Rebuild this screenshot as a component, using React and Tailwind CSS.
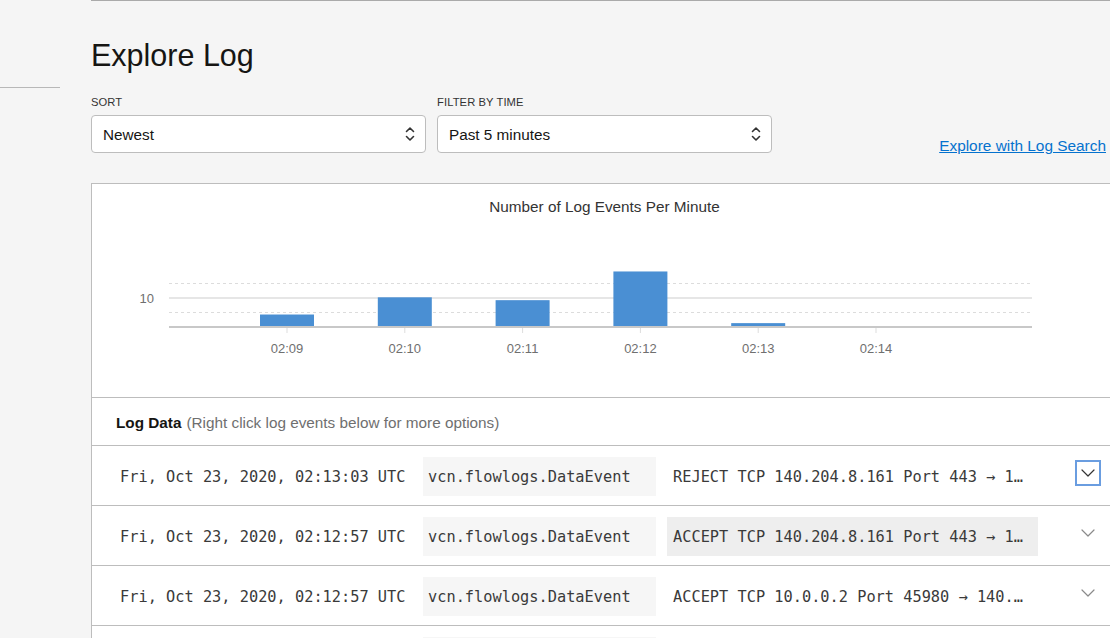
import React from "react";

function UpDown() {
  return (
    <svg width="10" height="16" viewBox="0 0 10 16" fill="none" stroke="#333" strokeWidth="1.6" strokeLinecap="round" strokeLinejoin="round">
      <polyline points="1.5,5.5 5,2 8.5,5.5" />
      <polyline points="1.5,10.5 5,14 8.5,10.5" />
    </svg>
  );
}

function Field({ label, value, className = "" }) {
  return (
    <div className={"flex flex-col " + className}>
      <div className="text-[11.2px] leading-[14px] text-[#333] tracking-[0.1px]">{label}</div>
      <div className="mt-[6px] w-[335px] h-[38px] bg-white border border-[#bdbdbd] rounded-[4px] flex items-center justify-between pl-[11px] pr-[10px]">
        <span className="pt-[2px] text-[15.3px] text-[#161513]">{value}</span>
        <UpDown />
      </div>
    </div>
  );
}

function Chevron({ color }) {
  return (
    <svg width="14" height="8" viewBox="0 0 14 8" fill="none" stroke={color} strokeWidth="1.2" strokeLinecap="round" strokeLinejoin="round">
      <polyline points="1,1 7,7 13,1" />
    </svg>
  );
}

const bars = [4, 10, 9, 19, 1];
const labels = ["02:09", "02:10", "02:11", "02:12", "02:13", "02:14"];

function Chart() {
  const unit = 2.87;
  const base = 109;
  return (
    <svg width="1025" height="180" viewBox="0 0 1025 180" className="block">
      <line x1="77" x2="940" y1="66.5" y2="66.5" stroke="#dcdcdc" strokeWidth="1" strokeDasharray="3 3" />
      <line x1="77" x2="940" y1="81" y2="81" stroke="#e6e6e6" strokeWidth="2" />
      <line x1="77" x2="940" y1="95.5" y2="95.5" stroke="#dcdcdc" strokeWidth="1" strokeDasharray="3 3" />
      <text x="62" y="86" textAnchor="end" fontSize="13" fill="#6f6f6f" fontFamily="Liberation Sans, Arial, sans-serif">10</text>
      {bars.map((v, i) => {
        const h = v * unit;
        return <rect key={i} x={168 + i * 117.8} y={base - h} width="54" height={h} fill="#4a8fd3" />;
      })}
      <line x1="77" x2="940" y1="110" y2="110" stroke="#c8c8c8" strokeWidth="2" />
      {labels.map((l, i) => {
        const cx = 195 + i * 117.8;
        return (
          <g key={l}>
            <line x1={cx} x2={cx} y1="111" y2="116" stroke="#dddddd" strokeWidth="1" />
            <text x={cx} y="136" textAnchor="middle" fontSize="13" fill="#6f6f6f" fontFamily="Liberation Sans, Arial, sans-serif">{l}</text>
          </g>
        );
      })}
    </svg>
  );
}

const rows = [
  { ts: "Fri, Oct 23, 2020, 02:13:03 UTC", msg: "REJECT TCP 140.204.8.161 Port 443 → 10.0.0.2 Port 45980", focus: true },
  { ts: "Fri, Oct 23, 2020, 02:12:57 UTC", msg: "ACCEPT TCP 140.204.8.161 Port 443 → 10.0.0.2 Port 45980", hover: true },
  { ts: "Fri, Oct 23, 2020, 02:12:57 UTC", msg: "ACCEPT TCP 10.0.0.2 Port 45980 → 140.204.8.161 Port 443" },
  { ts: "Fri, Oct 23, 2020, 02:12:57 UTC", msg: "ACCEPT TCP 10.0.0.2 Port 45980 → 140.204.8.161 Port 443" },
];

export default function App() {
  return (
    <div className="flex w-[1110px] h-[638px] overflow-hidden bg-[#f5f5f5] text-[#161513] font-['Liberation_Sans',Arial,sans-serif]">
      <aside className="w-[91px] shrink-0">
        <div className="mt-[87px] w-[60px] h-px bg-[#b8b8b8]" />
      </aside>
      <main className="flex-1 min-w-0 border-t border-[#aaaaaa]">
        <h1 className="mt-[36px] text-[30.5px] leading-[36px] text-[#161513]">Explore Log</h1>
        <div className="mt-[22px] flex items-end pr-[4px]">
          <Field label="SORT" value="Newest" />
          <Field label="FILTER BY TIME" value="Past 5 minutes" className="ml-[11px]" />
          <a href="#" className="ml-auto mb-[-3px] text-[15.4px] leading-[20px] text-[#0572ce] underline">
            Explore with Log Search
          </a>
        </div>
        <section className="mt-[30px] w-[1026px] bg-white border-l border-t border-[#bdbdbd]">
          <div className="h-[214px] border-b border-[#bdbdbd]">
            <div className="pt-[13px] text-center text-[15.3px] leading-[20px] text-[#333]">Number of Log Events Per Minute</div>
            <Chart />
          </div>
          <div className="h-[48px] border-b border-[#bdbdbd] flex items-center pt-[3px] pl-[24px] text-[15.3px]">
            <span className="font-bold text-[#161513]">Log Data</span>
            <span className="ml-[5px] text-[#6f6f6f]">(Right click log events below for more options)</span>
          </div>
          {rows.map((r, i) => (
            <div key={i} className="h-[60px] border-b border-[#bdbdbd] flex items-start pl-[23px] font-['DejaVu_Sans_Mono',monospace] text-[15.3px] text-[#3a3a3a]">
              <div className="mt-[11px] w-[308px] h-[39px] pt-[2px] leading-[37px] pl-[5px] whitespace-nowrap">{r.ts}</div>
              <div className="mt-[11px] w-[233px] h-[39px] pt-[2px] leading-[37px] pl-[5px] bg-[#f6f6f6] whitespace-nowrap">vcn.flowlogs.DataEvent</div>
              <div className={"mt-[11px] ml-[11px] w-[371px] h-[39px] pt-[2px] leading-[37px] pl-[6px] pr-[10px] truncate " + (r.hover ? "bg-[#eeeeee]" : "")}>
                {r.msg}
              </div>
              <div className={"mt-[14px] ml-[37px] w-[26px] h-[26px] flex items-center justify-center border-2 " + (r.focus ? "border-[#6a9de0]" : "border-transparent")}>
                <Chevron color={r.focus ? "#333" : "#8a8a8a"} />
              </div>
            </div>
          ))}
        </section>
      </main>
    </div>
  );
}
